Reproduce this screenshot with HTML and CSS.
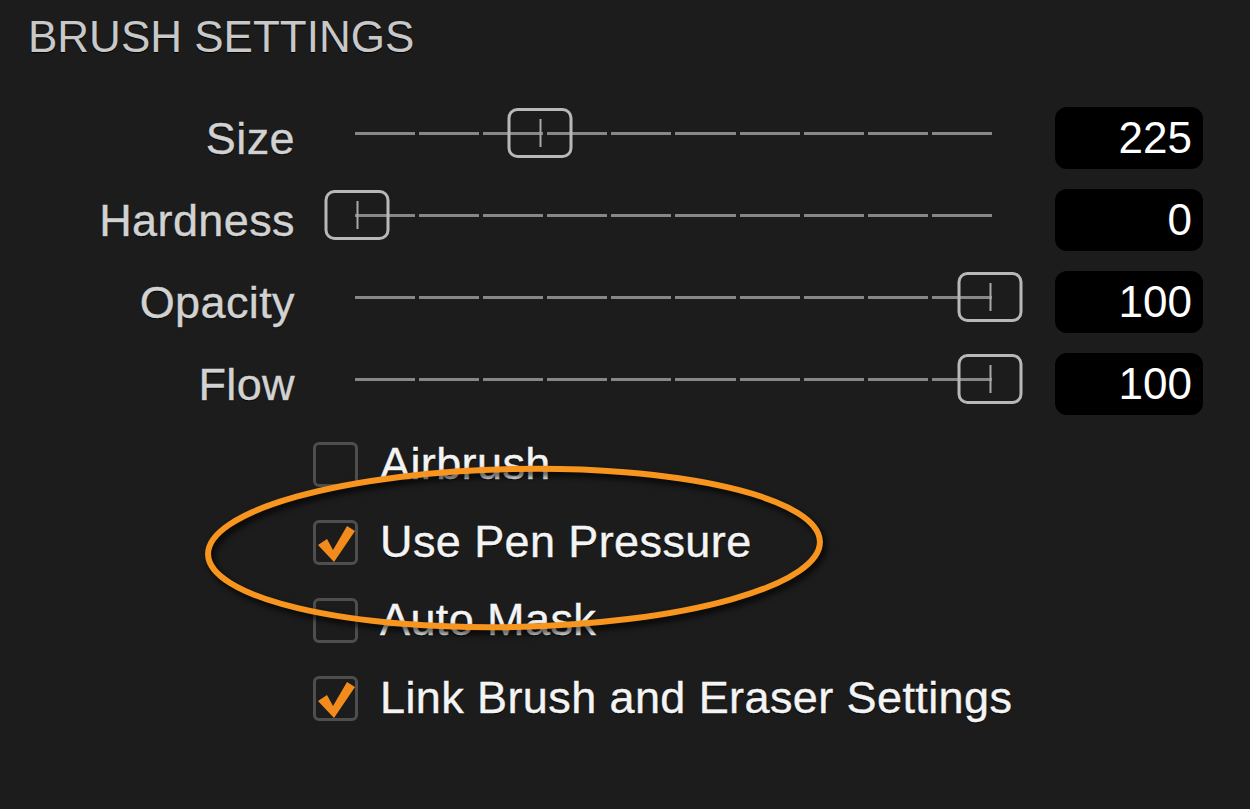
FILE: index.html
```html
<!DOCTYPE html>
<html>
<head lang="en">
    <meta charset="UTF-8">
    <title>Brush Settings</title>
    <link rel="stylesheet" href="styles.css">
</head>
<body>
<div class="panel">
    <h1 class="title">BRUSH SETTINGS</h1>

    <div class="sliders">
        <div class="row">
            <div class="label">Size</div>
            <div class="slider">
                <div class="track"></div>
                <div class="thumb" style="left: 29%;"></div>
            </div>
            <div class="value">225</div>
        </div>
        <div class="row">
            <div class="label">Hardness</div>
            <div class="slider">
                <div class="track"></div>
                <div class="thumb" style="left: 0.3%;"></div>
            </div>
            <div class="value">0</div>
        </div>
        <div class="row">
            <div class="label">Opacity</div>
            <div class="slider">
                <div class="track"></div>
                <div class="thumb" style="left: 99.7%;"></div>
            </div>
            <div class="value">100</div>
        </div>
        <div class="row">
            <div class="label">Flow</div>
            <div class="slider">
                <div class="track"></div>
                <div class="thumb" style="left: 99.7%;"></div>
            </div>
            <div class="value">100</div>
        </div>
    </div>

    <ul class="checks">
        <li><span class="box"></span>Airbrush</li>
        <li><span class="box checked"><svg viewBox="0 0 45 45"><path d="M5 25 L14 19 L20 30 L34 6 L42 11 L21 42 Z"/></svg></span>Use Pen Pressure</li>
        <li><span class="box"></span>Auto Mask</li>
        <li><span class="box checked"><svg viewBox="0 0 45 45"><path d="M5 25 L14 19 L20 30 L34 6 L42 11 L21 42 Z"/></svg></span>Link Brush and Eraser Settings</li>
    </ul>
</div>

<!-- annotation -->
<svg class="mark" width="1250" height="809" viewBox="0 0 1250 809">
    <ellipse cx="514" cy="548" rx="306" ry="79" transform="rotate(-1.2 514 548)"/>
</svg>
</body>
</html>
```

FILE: styles.css
```css
body,div,ul,li,h1 { margin:0; padding:0; }
ul,li { list-style:none; }

body {
    background: #1c1c1c;
    width: 1250px;
    height: 809px;
    overflow: hidden;
    position: relative;
    font-family: "Liberation Sans", Arial, Helvetica, sans-serif;
    font-size: 45px;
    letter-spacing: 0.4px;
}

.title {
    font-size: 44px;
    font-weight: normal;
    letter-spacing: 0;
    line-height: 44px;
    color: #c8c8c8;
    padding: 15px 0 0 28px;
    margin-bottom: 38px;
    text-shadow: 0 1px 1px #000;
}

.row {
    display: flex;
    align-items: center;
    height: 82px;
}

.label {
    width: 295px;
    text-align: right;
    color: #d2d2d2;
    line-height: 45px;
    -webkit-text-stroke: 0.4px #d2d2d2;
    text-shadow: 0 1px 1px #000;
}

.slider {
    position: relative;
    width: 637px;
    height: 50px;
    margin-left: 60px;
    margin-bottom: 10px;
    display: flex;
    align-items: center;
}

.track {
    width: 100%;
    height: 3px;
    background: repeating-linear-gradient(to right, #878787 0 60.1px, transparent 60.1px 64.1px);
}

.thumb {
    position: absolute;
    top: 0;
    width: 65px;
    height: 50px;
    box-sizing: border-box;
    border: 3px solid #b8b8b8;
    border-radius: 10px;
    transform: translateX(-50%);
}

.thumb:after {
    content: "";
    position: absolute;
    left: 29px;
    top: 8px;
    width: 2px;
    height: 28px;
    background: #a8a8a8;
}

.value {
    margin-left: 63px;
    width: 148px;
    height: 62px;
    box-sizing: border-box;
    background: #000;
    border-radius: 12px;
    color: #fff;
    text-align: right;
    padding-right: 11px;
    line-height: 62px;
    font-size: 44px;
    letter-spacing: 0;
}

.checks {
    padding-left: 313px;
}

.checks li {
    display: flex;
    align-items: center;
    height: 78px;
    color: #f4f4f4;
    -webkit-text-stroke: 0.4px #f4f4f4;
    text-shadow: 0 1px 1px #000;
}

.box {
    width: 45px;
    height: 45px;
    box-sizing: border-box;
    border: 3px solid #4e4e4e;
    border-radius: 6px;
    margin-right: 22px;
    position: relative;
}

.box svg {
    position: absolute;
    left: -3px;
    top: -3px;
    width: 45px;
    height: 45px;
    fill: #f38b1c;
}

.mark {
    position: absolute;
    left: 0;
    top: 0;
    pointer-events: none;
    filter: drop-shadow(3px 4px 3px rgba(0,0,0,0.85));
}

.mark ellipse {
    fill: none;
    stroke: #f7951f;
    stroke-width: 6;
}
```
